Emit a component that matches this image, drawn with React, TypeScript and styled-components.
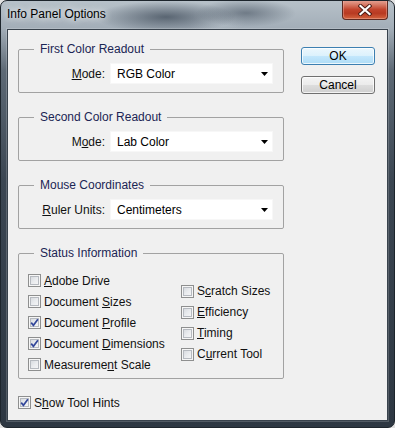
import React from 'react';
import styled, { createGlobalStyle } from 'styled-components';

const Global = createGlobalStyle`
  html, body { margin: 0; padding: 0; background: #e2e2e2; }
  body { font-family: "Liberation Sans", Arial, sans-serif; font-size: 12px; }
  * { box-sizing: border-box; }
`;

const Window = styled.div`
  width: 395px;
  height: 428px;
  display: flex;
  flex-direction: column;
  padding: 0 6px 6px;
  border: 1px solid #1d252c;
  border-radius: 7px;
  overflow: hidden;
  background:
    radial-gradient(ellipse 70px 16px at 165px 16px, rgba(62, 74, 88, 0.75), transparent),
    radial-gradient(ellipse 50px 14px at 245px 12px, rgba(70, 82, 96, 0.6), transparent),
    radial-gradient(ellipse 30px 12px at 215px 20px, rgba(190, 200, 208, 0.6), transparent),
    linear-gradient(to bottom, #b7c1c9 0px, #a3aeb8 27px, #5d6975 70px, #3b4652 180px, #2d3742 100%);
`;

const TitleBar = styled.div`
  height: 28px;
  flex: none;
  display: flex;
  justify-content: space-between;
  align-items: flex-start;
`;

const TitleText = styled.div`
  margin-top: 6px;
  line-height: 14px;
  font-size: 12px;
  color: #000;
  text-shadow: 0 0 6px rgba(255, 255, 255, 0.9), 0 0 10px rgba(255, 255, 255, 0.7);
`;

const CloseButton = styled.div`
  width: 46px;
  height: 20px;
  margin-top: -1px;
  display: flex;
  align-items: center;
  justify-content: center;
  border: 1px solid #5e2a22;
  border-top: none;
  border-radius: 0 0 4px 4px;
  background: linear-gradient(
    to bottom,
    #e7a79a 0%,
    #d67a66 25%,
    #c2442d 50%,
    #b83a22 70%,
    #d4643f 100%
  );
  box-shadow: inset 0 0 0 1px rgba(255, 210, 200, 0.35);
`;

const Client = styled.div`
  flex: 1;
  display: flex;
  align-items: flex-start;
  padding: 12px 11px 0 10px;
  border: 1px solid #38424c;
  background: #f0f0f0;
  box-shadow: 0 0 0 1px rgba(255, 255, 255, 0.18);
`;

const LeftColumn = styled.div`
  width: 266px;
  flex: none;
  display: flex;
  flex-direction: column;
  gap: 17px;
`;

const Group = styled.fieldset`
  margin: 0;
  min-width: 0;
  border: 1px solid #a2a2a2;
  border-radius: 2px;
  padding: 7px 0 8px 0;
`;

const StatusGroup = styled(Group)`
  padding: 10px 0 3px 0;
`;

const Legend = styled.legend`
  margin-left: 15px;
  padding: 0 6px;
  line-height: 14px;
  color: #1b2554;
`;

const FieldRow = styled.div`
  display: flex;
  align-items: center;
  gap: 5px;
`;

const FieldLabel = styled.label`
  width: 86px;
  text-align: right;
  color: #111;
  line-height: 14px;
`;

const Select = styled.div`
  width: 163px;
  height: 21px;
  display: flex;
  align-items: center;
  justify-content: space-between;
  padding: 0 4px 0 6px;
  background: #fff;
  border: 1px solid #f7f7f7;
  color: #000;
`;

const Key = styled.span`
  text-decoration: underline;
  text-underline-offset: 1px;
`;

const ChecksLayout = styled.div`
  display: flex;
  align-items: center;
`;

const CheckColumn = styled.div<{ $width?: number; $indent?: number }>`
  display: flex;
  flex-direction: column;
  width: ${(p) => (p.$width ? `${p.$width}px` : 'auto')};
  padding-left: ${(p) => p.$indent ?? 0}px;
`;

const CheckRow = styled.div<{ $top?: number }>`
  height: 21px;
  display: flex;
  align-items: center;
  gap: 3px;
  color: #111;
  margin-top: ${(p) => p.$top ?? 0}px;
`;

const Box = styled.span`
  width: 13px;
  height: 13px;
  flex: none;
  display: flex;
  align-items: center;
  justify-content: center;
  border: 1px solid #8e8f8f;
  background: linear-gradient(135deg, #cfd3d8 0%, #e9ebee 50%, #fafafa 100%);
  box-shadow: inset 0 0 0 1px #f6f6f6, inset 0 0 0 2px #b6bac0;
`;

const ButtonColumn = styled.div`
  margin-left: 17px;
  margin-top: 5px;
  display: flex;
  flex-direction: column;
  gap: 11px;
`;

const Button = styled.button<{ $default?: boolean }>`
  width: 74px;
  height: 18px;
  padding: 0;
  font-family: "Liberation Sans", Arial, sans-serif;
  font-size: 12px;
  line-height: 16px;
  color: #000;
  border: 1px solid ${(p) => (p.$default ? '#3c7fb1' : '#707070')};
  border-radius: 3px;
  background: ${(p) =>
    p.$default
      ? 'linear-gradient(to bottom, #ecf7fd 0%, #dbf1fc 50%, #c3e7fc 51%, #aedcf6 100%)'
      : 'linear-gradient(to bottom, #f4f4f4 0%, #ebebeb 50%, #dddddd 51%, #cfcfcf 100%)'};
  box-shadow: inset 0 0 0 1px rgba(255, 255, 255, 0.75);
`;

const Check: React.FC<{ checked?: boolean; children: React.ReactNode; top?: number }> = ({
  checked,
  children,
  top,
}) => (
  <CheckRow $top={top}>
    <Box>
      {checked && (
        <svg width="9" height="9" viewBox="0 0 9 9">
          <path d="M1.2 4.6 L3.4 7.3 L7.9 1.2" fill="none" stroke="#33479a" strokeWidth="1.7" />
        </svg>
      )}
    </Box>
    <span>{children}</span>
  </CheckRow>
);

const Arrow = () => (
  <svg width="7" height="4" viewBox="0 0 7 4">
    <path d="M0 0 H7 L3.5 4 Z" fill="#000" />
  </svg>
);

export default function App() {
  return (
    <>
      <Global />
      <Window>
        <TitleBar>
          <TitleText>Info Panel Options</TitleText>
          <CloseButton>
            <svg width="14" height="12" viewBox="0 0 14 12">
              <path d="M2.5 2 L11.5 10 M11.5 2 L2.5 10" stroke="#4b1d16" strokeWidth="4" strokeLinecap="square" />
              <path d="M2.5 2 L11.5 10 M11.5 2 L2.5 10" stroke="#ffffff" strokeWidth="2.2" strokeLinecap="square" />
            </svg>
          </CloseButton>
        </TitleBar>
        <Client>
          <LeftColumn>
            <Group>
              <Legend>First Color Readout</Legend>
              <FieldRow>
                <FieldLabel>
                  <Key>M</Key>ode:
                </FieldLabel>
                <Select>
                  <span>RGB Color</span>
                  <Arrow />
                </Select>
              </FieldRow>
            </Group>
            <Group>
              <Legend>Second Color Readout</Legend>
              <FieldRow>
                <FieldLabel>
                  M<Key>o</Key>de:
                </FieldLabel>
                <Select>
                  <span>Lab Color</span>
                  <Arrow />
                </Select>
              </FieldRow>
            </Group>
            <Group>
              <Legend>Mouse Coordinates</Legend>
              <FieldRow>
                <FieldLabel>
                  <Key>R</Key>uler Units:
                </FieldLabel>
                <Select>
                  <span>Centimeters</span>
                  <Arrow />
                </Select>
              </FieldRow>
            </Group>
            <StatusGroup>
              <Legend>Status Information</Legend>
              <ChecksLayout>
                <CheckColumn $width={162} $indent={9}>
                  <Check>
                    <Key>A</Key>dobe Drive
                  </Check>
                  <Check>
                    Document <Key>S</Key>izes
                  </Check>
                  <Check checked>
                    Document <Key>P</Key>rofile
                  </Check>
                  <Check checked>
                    Document <Key>D</Key>imensions
                  </Check>
                  <Check>
                    Measureme<Key>n</Key>t Scale
                  </Check>
                </CheckColumn>
                <CheckColumn>
                  <Check>
                    S<Key>c</Key>ratch Sizes
                  </Check>
                  <Check>
                    <Key>E</Key>fficiency
                  </Check>
                  <Check>
                    <Key>T</Key>iming
                  </Check>
                  <Check>
                    C<Key>u</Key>rrent Tool
                  </Check>
                </CheckColumn>
              </ChecksLayout>
            </StatusGroup>
            <Check checked top={-4}>
              S<Key>h</Key>ow Tool Hints
            </Check>
          </LeftColumn>
          <ButtonColumn>
            <Button $default>OK</Button>
            <Button>Cancel</Button>
          </ButtonColumn>
        </Client>
      </Window>
    </>
  );
}
